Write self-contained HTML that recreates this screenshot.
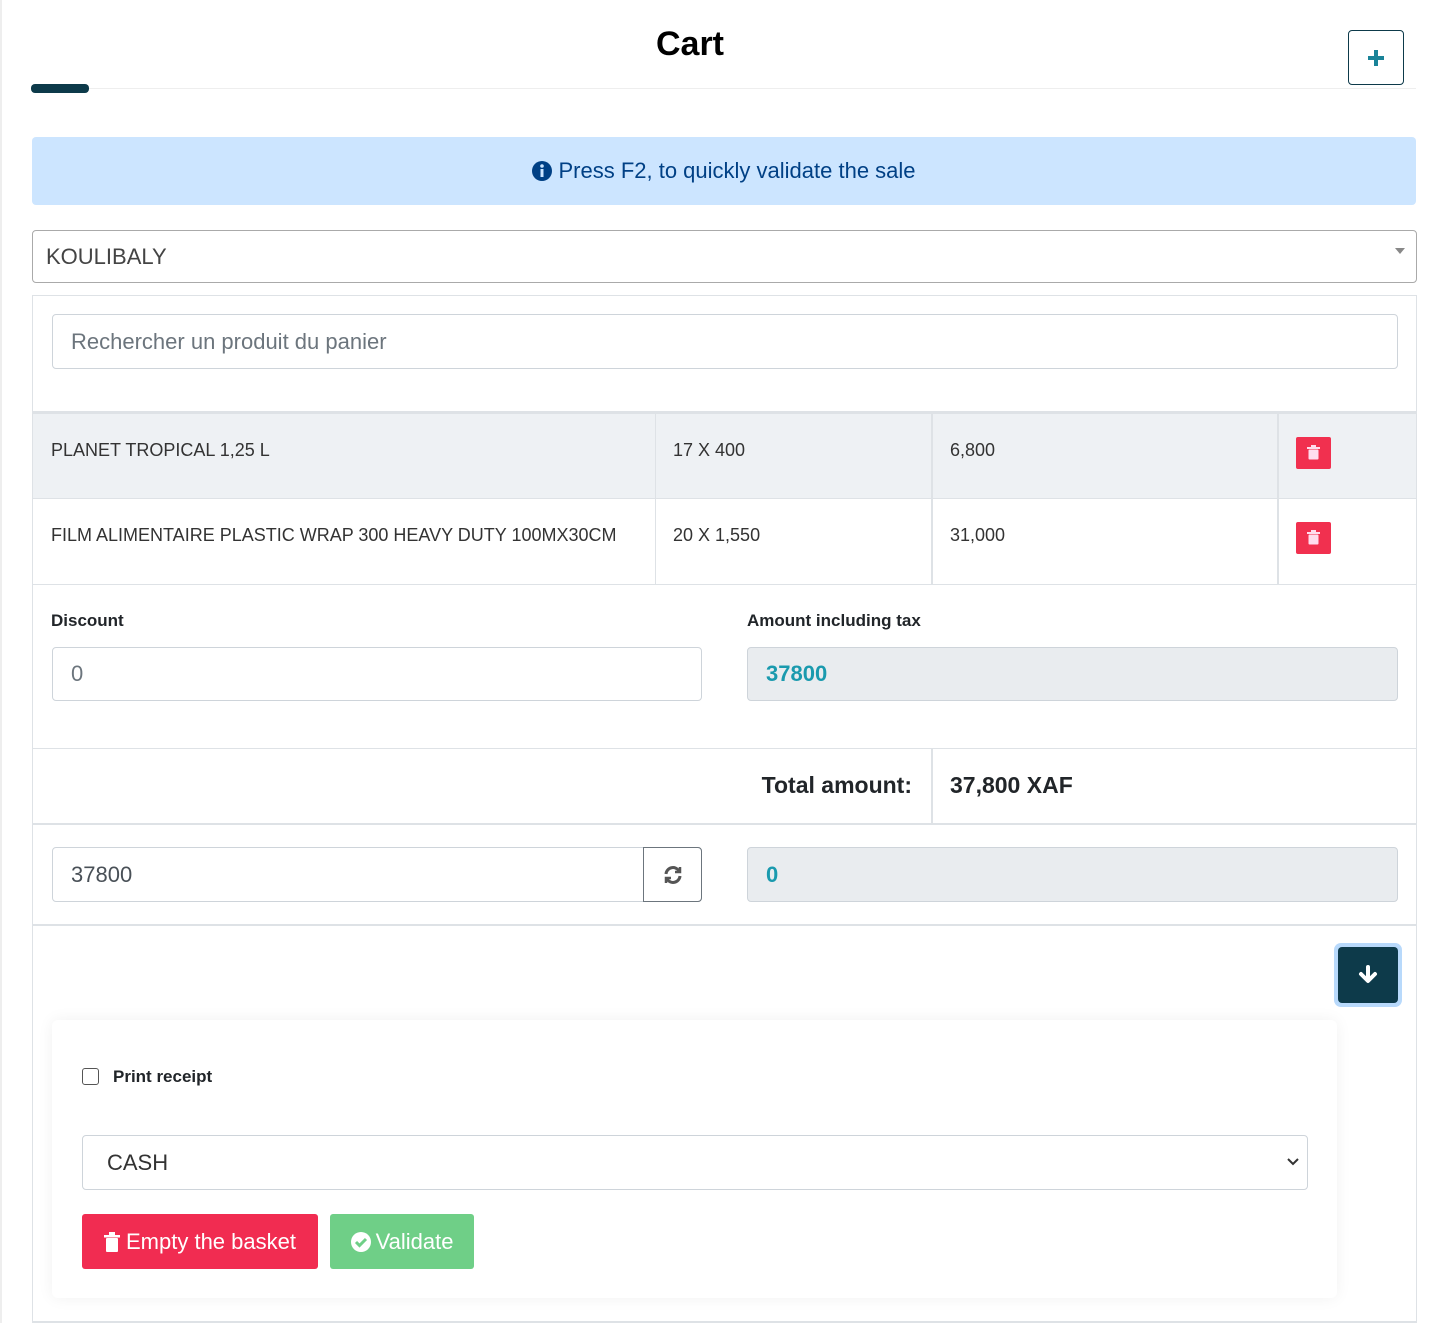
<!DOCTYPE html>
<html><head><meta charset="utf-8"><style>
*{box-sizing:border-box;margin:0;padding:0}
body{width:1446px;height:1323px;background:#fff;font-family:"Liberation Sans",Arial,sans-serif;position:relative;overflow:hidden;color:#212529}
.a{position:absolute}
.inp{position:absolute;border:1px solid #ced4da;border-radius:4px;background:#fff;font-size:22px;color:#495057;padding-left:18px;display:flex;align-items:center}
.td{position:absolute;font-size:18px;color:#333}
.hl{position:absolute;height:1px;background:#dee2e6}
.vl{position:absolute;width:1px;background:#dee2e6}
.trash{position:absolute;width:35px;height:32px;background:#f1304f;border-radius:2px}
</style></head><body>
<div class="a" style="left:0;top:0;width:2px;height:1323px;background:#eee"></div>
<div class="a" style="left:0;top:25px;width:1380px;text-align:center;font-size:34px;font-weight:bold;color:#000">Cart</div>
<div class="a" style="left:31px;top:88px;width:1385px;height:1px;background:#eee"></div>
<div class="a" style="left:31px;top:84px;width:58px;height:9px;background:#0d3a4a;border-radius:4px"></div>
<div class="a" style="left:1348px;top:30px;width:56px;height:55px;border:1px solid #0d3a4a;border-radius:4px;display:flex;align-items:center;justify-content:center">
<svg width="18" height="18" viewBox="0 0 18 18"><path d="M9 1v16M1 9h16" stroke="#1a8398" stroke-width="4"/></svg></div>
<div class="a" style="left:32px;top:137px;width:1384px;height:68px;background:#cce5ff;border-radius:4px;display:flex;align-items:center;justify-content:center;font-size:22px;color:#004085">
<svg width="20" height="20" viewBox="0 0 20 20" style="margin-right:6px"><circle cx="10" cy="10" r="10" fill="#004085"/><rect x="8.5" y="8" width="3" height="8" fill="#cce5ff"/><circle cx="10" cy="5" r="1.8" fill="#cce5ff"/></svg>Press F2, to quickly validate the sale</div>
<div class="inp" style="left:32px;top:230px;width:1385px;height:53px;border-color:#aaa;color:#444;padding-left:13px">KOULIBALY</div>
<div class="a" style="left:1395px;top:248px;width:0;height:0;border-left:5px solid transparent;border-right:5px solid transparent;border-top:6px solid #888"></div>
<div class="a" style="left:32px;top:295px;width:1385px;height:1028px;border:1px solid #dee2e6;border-bottom:2px solid #dee2e6"></div>
<div class="inp" style="left:52px;top:314px;width:1346px;height:55px;color:#6c757d">Rechercher un produit du panier</div>
<div class="a" style="left:33px;top:411px;width:1383px;height:88px;background:#eef1f4;border-top:3px solid #dee2e6"></div>
<div class="hl" style="left:33px;top:498px;width:1383px"></div>
<div class="hl" style="left:33px;top:584px;width:1383px"></div>
<div class="vl" style="left:655px;top:413px;height:171px"></div>
<div class="vl" style="left:931px;top:413px;height:171px;width:2px"></div>
<div class="vl" style="left:1277px;top:413px;height:171px;width:2px"></div>
<div class="td" style="left:51px;top:440px">PLANET TROPICAL 1,25 L</div>
<div class="td" style="left:673px;top:440px">17 X 400</div>
<div class="td" style="left:950px;top:440px">6,800</div>
<div class="td" style="left:51px;top:525px">FILM ALIMENTAIRE PLASTIC WRAP 300 HEAVY DUTY 100MX30CM</div>
<div class="td" style="left:673px;top:525px">20 X 1,550</div>
<div class="td" style="left:950px;top:525px">31,000</div>
<div class="trash" style="left:1296px;top:437px"></div>
<div class="trash" style="left:1296px;top:522px"></div>
<svg class="a" style="left:1307px;top:445px" width="13" height="15" viewBox="0 0 13 15"><rect x="0" y="2" width="13" height="2" fill="#fde"/><rect x="4" y="0" width="5" height="2" fill="#fde"/><rect x="1.5" y="4.5" width="10" height="10" rx="1" fill="#fde"/></svg>
<svg class="a" style="left:1307px;top:530px" width="13" height="15" viewBox="0 0 13 15"><rect x="0" y="2" width="13" height="2" fill="#fde"/><rect x="4" y="0" width="5" height="2" fill="#fde"/><rect x="1.5" y="4.5" width="10" height="10" rx="1" fill="#fde"/></svg>
<div class="a" style="left:51px;top:611px;font-size:17px;font-weight:bold">Discount</div>
<div class="a" style="left:747px;top:611px;font-size:17px;font-weight:bold">Amount including tax</div>
<div class="inp" style="left:52px;top:647px;width:650px;height:54px;color:#6c757d">0</div>
<div class="inp" style="left:747px;top:647px;width:651px;height:54px;background:#e9ecef;color:#1a9aae;font-weight:bold">37800</div>
<div class="hl" style="left:33px;top:748px;width:1383px"></div>
<div class="hl" style="left:33px;top:823px;width:1383px;height:2px"></div>
<div class="vl" style="left:931px;top:749px;height:75px;width:2px"></div>
<div class="a" style="left:600px;top:772px;width:312px;text-align:right;font-size:23px;font-weight:bold">Total amount:</div>
<div class="a" style="left:950px;top:772px;font-size:23px;font-weight:bold">37,800 XAF</div>
<div class="inp" style="left:52px;top:847px;width:650px;height:55px">37800</div>
<div class="a" style="left:643px;top:847px;width:59px;height:55px;border:1px solid #6c757d;border-radius:0 4px 4px 0;display:flex;align-items:center;justify-content:center">
<svg width="20" height="20" viewBox="0 0 20 20" fill="none" stroke="#555" stroke-width="3"><path d="M3 9a7 7 0 0 1 13-3"/><path d="M17 11a7 7 0 0 1-13 3"/><path d="M17 2v5h-5" stroke-width="2.5"/><path d="M3 18v-5h5" stroke-width="2.5"/></svg></div>
<div class="inp" style="left:747px;top:847px;width:651px;height:55px;background:#e9ecef;color:#1a9aae;font-weight:bold">0</div>
<div class="hl" style="left:33px;top:924px;width:1383px;height:2px"></div>
<div class="a" style="left:1334px;top:943px;width:68px;height:64px;border-radius:7px;background:#b8d9fb"></div>
<div class="a" style="left:1338px;top:947px;width:60px;height:56px;border-radius:4px;background:#0d3a4a;display:flex;align-items:center;justify-content:center">
<svg width="20" height="20" viewBox="0 0 20 20"><path d="M10 2v13M3 9l7 7 7-7" stroke="#fff" stroke-width="4" fill="none" stroke-linecap="round" stroke-linejoin="round"/></svg></div>
<div class="a" style="left:52px;top:1020px;width:1285px;height:278px;background:#fff;border-radius:6px;box-shadow:0 0 16px rgba(0,0,0,0.06)"></div>
<div class="a" style="left:82px;top:1068px;width:17px;height:17px;border:1.5px solid #555;border-radius:3px"></div>
<div class="a" style="left:113px;top:1067px;font-size:17px;font-weight:bold">Print receipt</div>
<div class="inp" style="left:82px;top:1135px;width:1226px;height:55px;padding-left:24px;color:#333">CASH</div>
<svg class="a" style="left:1286px;top:1156px" width="14" height="12" viewBox="0 0 14 12"><path d="M2 3l5 5 5-5" stroke="#333" stroke-width="2" fill="none"/></svg>
<div class="a" style="left:82px;top:1214px;width:236px;height:55px;background:#f12c51;border-radius:3px;color:#fff;font-size:22px;display:flex;align-items:center;justify-content:center">
<svg width="16" height="20" viewBox="0 0 16 20" style="margin-right:6px"><rect x="0" y="3" width="16" height="2.5" fill="#fff"/><rect x="5" y="0" width="6" height="3" fill="#fff"/><rect x="2" y="6" width="12" height="14" rx="1" fill="#fff"/></svg>Empty the basket</div>
<div class="a" style="left:330px;top:1214px;width:144px;height:55px;background:#6fcf87;border-radius:3px;color:#fff;font-size:22px;display:flex;align-items:center;justify-content:center">
<svg width="20" height="20" viewBox="0 0 20 20" style="margin-right:5px"><circle cx="10" cy="10" r="10" fill="#fff"/><path d="M5 10l3.5 3.5L15 7" stroke="#6fcf87" stroke-width="3" fill="none"/></svg>Validate</div>
</body></html>
